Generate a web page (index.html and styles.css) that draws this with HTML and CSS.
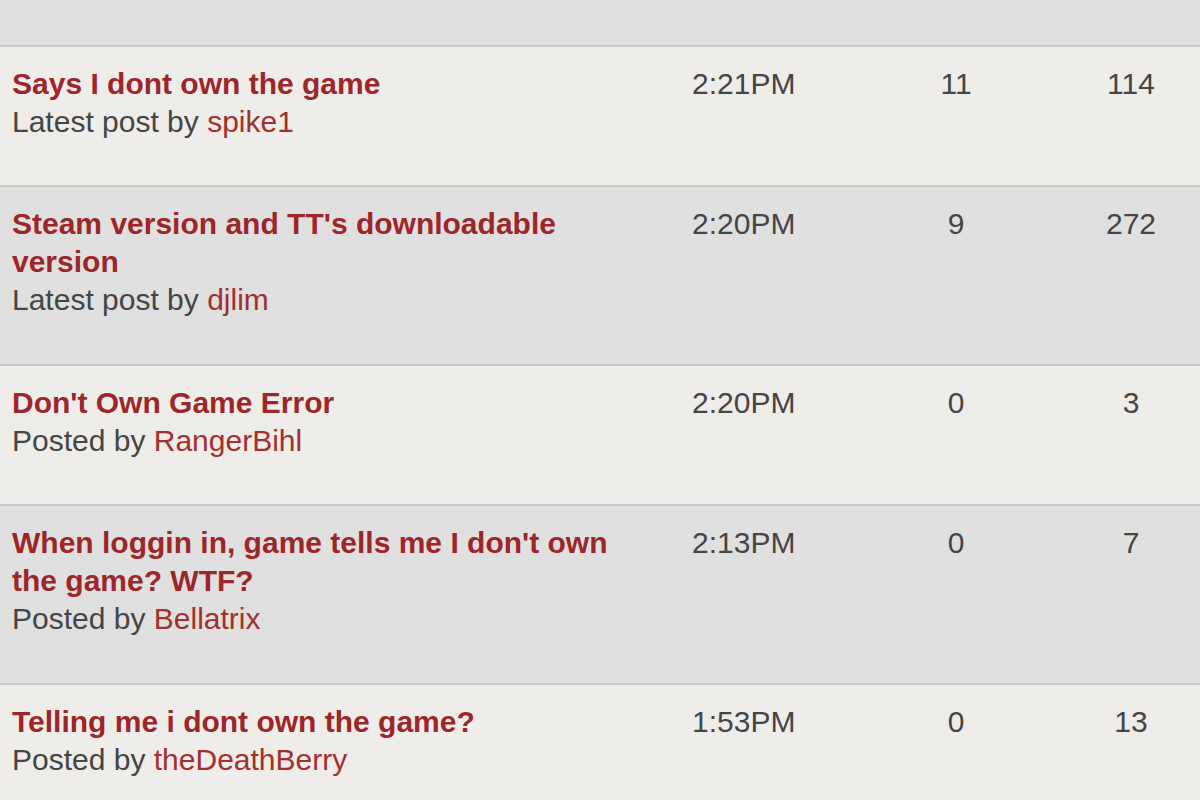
FILE: index.html
```html
<!DOCTYPE html>
<html lang="en">
<head>
    <meta charset="UTF-8">
    <meta name="viewport" content="width=device-width, initial-scale=1.0">
    <title>Forum Topics</title>
    <link rel="stylesheet" href="styles.css">
</head>
<body>
    <div class="topic-list">
        <div class="topic-row alt clipped"></div>

        <div class="topic-row">
            <div class="topic-main">
                <a class="topic-title" href="#">Says I dont own the game</a>
                <div class="topic-meta">Latest post by <a href="#">spike1</a></div>
            </div>
            <div class="topic-time">2:21PM</div>
            <div class="topic-count">11</div>
            <div class="topic-count views">114</div>
        </div>

        <div class="topic-row alt">
            <div class="topic-main">
                <a class="topic-title" href="#">Steam version and TT's downloadable version</a>
                <div class="topic-meta">Latest post by <a href="#">djlim</a></div>
            </div>
            <div class="topic-time">2:20PM</div>
            <div class="topic-count">9</div>
            <div class="topic-count views">272</div>
        </div>

        <div class="topic-row">
            <div class="topic-main">
                <a class="topic-title" href="#">Don't Own Game Error</a>
                <div class="topic-meta">Posted by <a href="#">RangerBihl</a></div>
            </div>
            <div class="topic-time">2:20PM</div>
            <div class="topic-count">0</div>
            <div class="topic-count views">3</div>
        </div>

        <div class="topic-row alt">
            <div class="topic-main">
                <a class="topic-title" href="#">When loggin in, game tells me I don't own the game? WTF?</a>
                <div class="topic-meta">Posted by <a href="#">Bellatrix</a></div>
            </div>
            <div class="topic-time">2:13PM</div>
            <div class="topic-count">0</div>
            <div class="topic-count views">7</div>
        </div>

        <div class="topic-row">
            <div class="topic-main">
                <a class="topic-title" href="#">Telling me i dont own the game?</a>
                <div class="topic-meta">Posted by <a href="#">theDeathBerry</a></div>
            </div>
            <div class="topic-time">1:53PM</div>
            <div class="topic-count">0</div>
            <div class="topic-count views">13</div>
        </div>
    </div>
</body>
</html>
```

FILE: styles.css
```css
body {
    margin: 0;
    font-family: "Liberation Sans", Arial, sans-serif;
    font-size: 30px;
    line-height: 38px;
    color: #454545;
    background-color: #eeede9;
    overflow: hidden;
}

a {
    color: #a0302e;
    text-decoration: none;
}

.topic-list {
    width: 1200px;
}

.topic-row {
    display: grid;
    grid-template-columns: 680px 192px 168px 160px;
    padding: 18px 0 44px;
    background: #eeede9;
    border-bottom: 2px solid #c8c8c8;
}

.topic-row.alt {
    background: #e0e0e0;
    padding-bottom: 45px;
}

.topic-row.clipped {
    height: 47px;
    padding: 0;
    box-sizing: border-box;
}

.topic-main {
    padding-left: 12px;
    width: 630px;
}

.topic-title {
    font-weight: bold;
    color: #9c2629;
}

.topic-meta a {
    color: #a3302f;
}

.topic-time {
    padding-left: 12px;
}

.topic-count {
    text-align: center;
}

.topic-count.views {
    padding-left: 22px;
}
```
